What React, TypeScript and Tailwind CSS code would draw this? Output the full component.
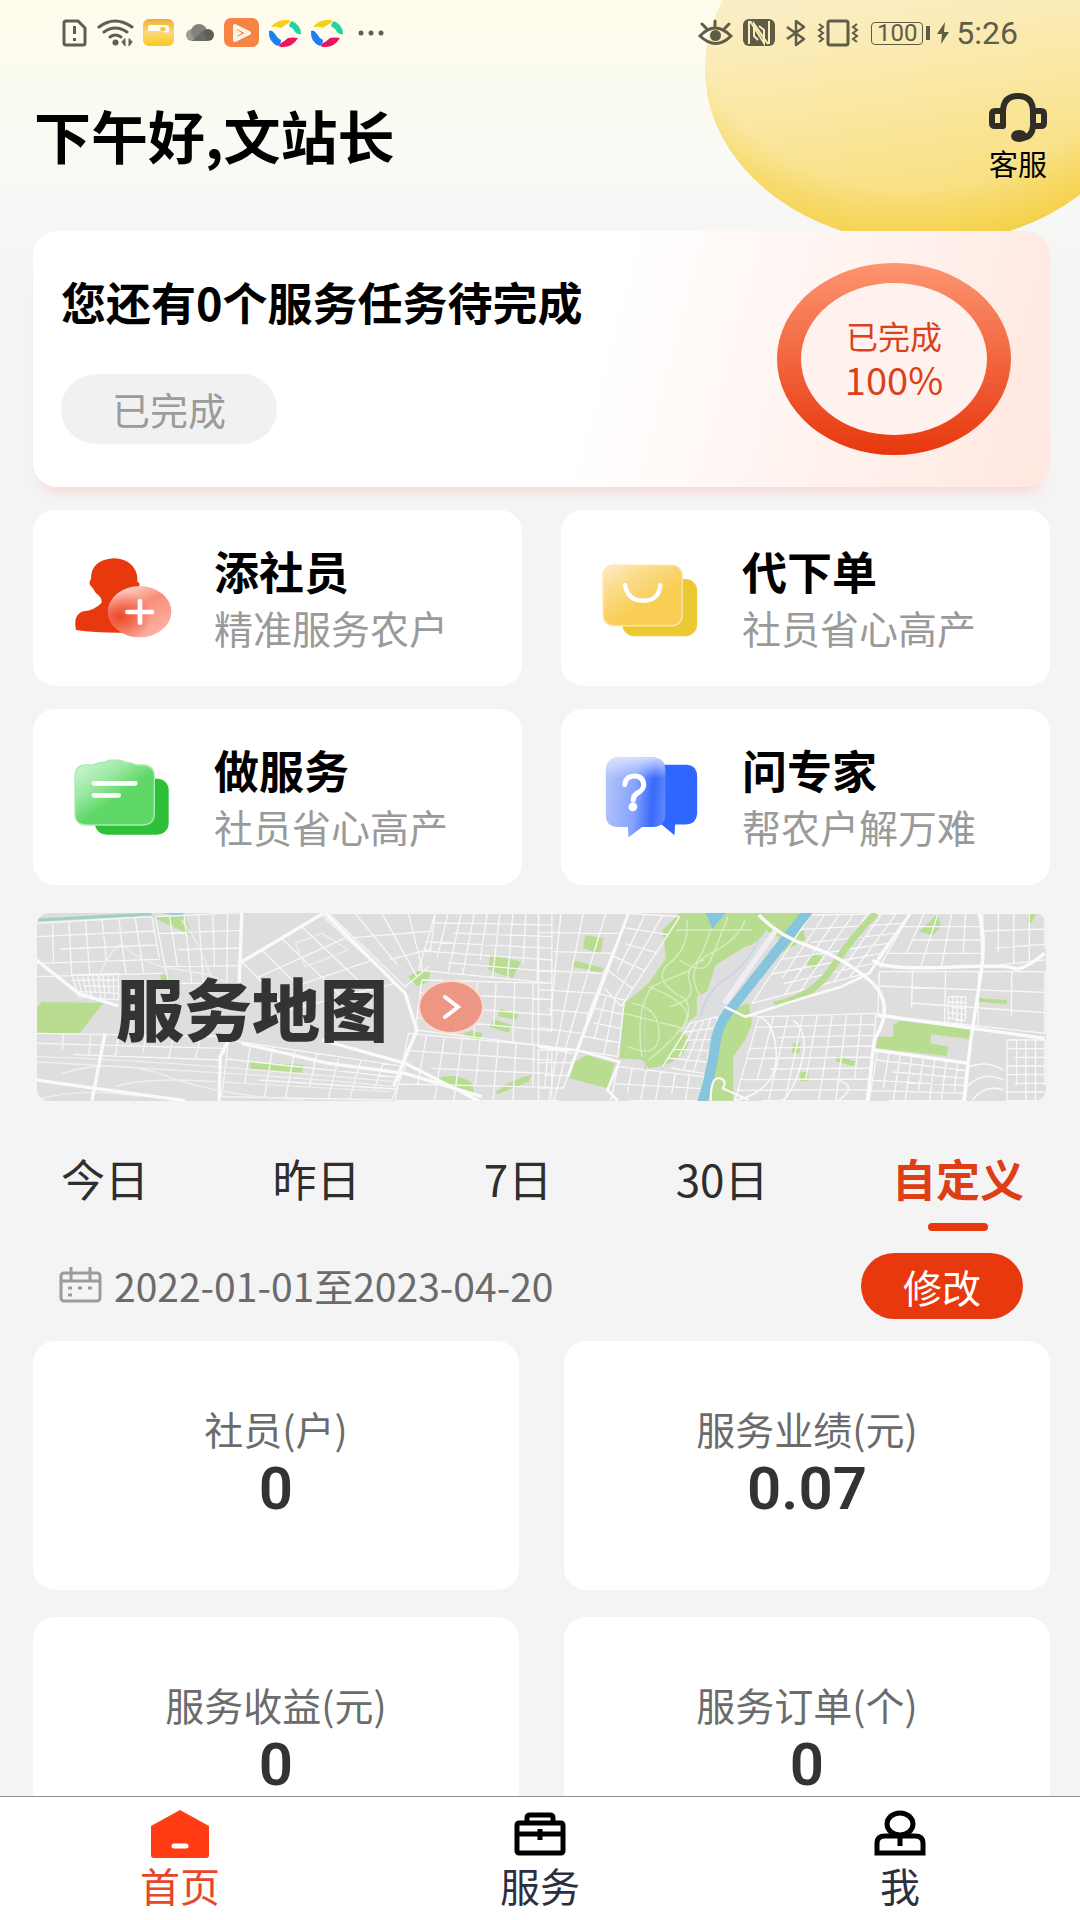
import { useState } from 'react'
import type { ReactNode } from 'react'

type Pt = [number, number]

// Street mesh inside a quad given clockwise from the top left corner
function mesh(a: Pt, b: Pt, c: Pt, d: Pt, cols: number, rows: number) {
  const mix = (p: Pt, q: Pt, t: number): Pt => [p[0] + (q[0] - p[0]) * t, p[1] + (q[1] - p[1]) * t]
  const seg = (p: Pt, q: Pt) => `M${p[0].toFixed(0)} ${p[1].toFixed(0)}L${q[0].toFixed(0)} ${q[1].toFixed(0)}`
  let out = ''
  for (let i = 0; i <= cols; i++) {
    const t = i / cols
    const top = mix(a, b, t)
    const bottom = mix(d, c, t)
    out += i % 3 === 1 ? seg(top, mix(top, bottom, 0.75)) : seg(top, bottom)
  }
  for (let j = 0; j <= rows; j++) {
    const t = j / rows
    const left = mix(a, d, t)
    const right = mix(b, c, t)
    out += j % 3 === 2 ? seg(mix(left, right, 0.2), right) : seg(left, right)
  }
  return out
}

const WEST_STREETS = [
  mesh([22, 70], [370, 50], [400, 220], [22, 230], 7, 4),
  mesh([380, 50], [640, 38], [630, 250], [420, 250], 6, 4),
  mesh([640, 185], [880, 45], [1100, 250], [780, 330], 4, 3),
  mesh([900, 40], [1220, 40], [1200, 200], [1130, 260], 4, 3),
  mesh([1220, 40], [1570, 40], [1570, 250], [1170, 210], 9, 6),
  mesh([1180, 240], [1570, 250], [1570, 440], [1160, 390], 7, 4),
  mesh([130, 225], [270, 220], [270, 300], [150, 290], 9, 4),
  mesh([22, 400], [600, 410], [580, 480], [22, 460], 7, 2),
  mesh([600, 420], [1130, 500], [1090, 600], [580, 590], 8, 3),
  mesh([1140, 400], [1570, 440], [1570, 602], [1100, 602], 8, 4),
]

const EAST_STREETS = [
  mesh([0, 40], [260, 40], [100, 460], [0, 440], 4, 7),
  mesh([260, 40], [410, 50], [240, 320], [180, 250], 3, 5),
  mesh([170, 280], [250, 300], [230, 470], [110, 450], 3, 4),
  mesh([0, 450], [110, 450], [60, 602], [0, 602], 4, 4),
  mesh([230, 500], [480, 530], [470, 602], [210, 602], 6, 2),
  mesh([440, 370], [520, 350], [480, 520], [360, 500], 4, 5),
  mesh([790, 45], [1080, 40], [950, 220], [620, 310], 7, 6),
  mesh([640, 350], [980, 340], [960, 602], [570, 602], 8, 8),
  mesh([1080, 40], [1280, 40], [1290, 200], [990, 200], 5, 4),
  mesh([1290, 40], [1470, 40], [1470, 180], [1290, 200], 4, 3),
  mesh([990, 215], [1470, 215], [1470, 400], [985, 345], 5, 3),
  mesh([1190, 290], [1240, 290], [1240, 380], [1190, 370], 4, 5),
  mesh([985, 450], [1250, 490], [1240, 602], [960, 602], 8, 5),
  mesh([1360, 420], [1470, 420], [1470, 602], [1360, 602], 4, 7),
]

const MAIN_ROADS = 'M22 178 150 280 270 318M640 38 632 250M640 185 885 40M890 40 1130 280 1165 390 1095 560M640 430 900 490 1130 520 1360 590M600 420 575 470 572 602M22 540 200 565 470 602M230 400 190 602M880 420 1130 490 1350 602'

function MapArt() {
  return (
    <svg viewBox="0 0 1010 188" preserveAspectRatio="xMidYMid slice" className="absolute inset-0 w-full h-full" aria-hidden="true">
      <rect width="1010" height="188" fill="#dedede" />
      <g transform="translate(-8 -13) scale(0.33333)" fill="none" strokeLinejoin="round">
        <path d="M22 60 370 42" stroke="#9fd0c4" strokeWidth="9" />
        <path d="M400 40h70l-10 10z" fill="#8cc8e0" />
        <g fill="#b9dd90">
          <path d="M370 50 470 50 492 108z" />
          <path d="M40 306 225 308 155 398 22 402 22 325z" />
          <path d="M1385 162 1478 185 1452 235 1380 210z" />
          <path d="M1140 230 1180 205 1205 210 1200 245 1165 258z" />
          <path d="M1415 325 1470 345 1460 360 1408 348z" />
          <path d="M1395 358 1450 375 1440 398 1383 380z" />
          <path d="M1300 400 1330 392 1363 400 1350 425z" />
          <path d="M665 485 825 495 820 522 665 508z" />
          <path d="M1225 535Q1290 515 1330 550L1338 585 1290 575z" />
          <path d="M1400 578Q1440 540 1510 525L1500 545 1410 582z" />
          <path d="M395 225h25v28h-20z" />
        </g>
        <path d={WEST_STREETS.join('')} stroke="#f7f7f7" strokeWidth="4" />
        <path d="M280 130Q310 170 400 200L545 225M280 130Q220 180 210 250M460 60Q520 140 545 225L625 262M800 130 880 100 960 150 830 200zM22 470Q300 480 560 500T1100 545M22 485Q280 500 600 520T1090 560M100 520Q260 470 420 530T830 600M260 560Q360 530 560 545L1080 575M22 600Q160 560 330 590" stroke="#efefef" strokeWidth="4" />
        <path d={MAIN_ROADS} stroke="#fafafa" strokeWidth="10" />
      </g>
      <g transform="translate(502 -13) scale(0.3444 0.33333)" fill="none" strokeLinejoin="round">
        <g fill="#b9dd90">
          <path d="M412 38H765L730 100 770 90 775 120 700 160 560 330 610 310 620 370 600 420 565 470 565 602H490L520 360 560 330 700 120 660 90 640 130 600 140 515 195 490 275 460 290 460 345 405 390 438 415Q430 490 320 505L300 480 235 475 250 310 320 250 370 175 360 90z" />
          <path d="M135 105 188 115 180 162 130 145z" />
          <path d="M105 182 190 205 183 218 100 200z" />
          <path d="M105 485 140 465 222 490 200 565 90 535z" />
          <path d="M795 155 825 170 800 208 775 190z" />
          <path d="M1105 95 1160 40 1168 80 1145 106z" />
          <path d="M1422 40h22l-12 30h-12z" />
          <path d="M1272 293 1360 300 1360 312 1272 305z" />
          <path d="M1050 362 1256 388 1253 418 1140 402 1138 430 1190 440 1185 468 980 445 985 410 1030 410 1030 375z" />
          <path d="M868 466 922 486 912 498 862 484z" />
          <path d="M760 516h24v28h-24zM738 430h20v28h-22z" />
        </g>
        <path d="M515 195 600 150 655 105 700 110 560 320 500 330 460 345 460 290 490 275z" fill="#dedee0" />
        <path d={EAST_STREETS.join('')} stroke="#f8f8f8" strokeWidth="4" />
        <path d="M685 315Q800 290 855 200T980 40" stroke="#b9dd90" strokeWidth="20" />
        <path d="M485 38h60l-40 48z" fill="#86c5e0" />
        <path d="M785 30 560 325Q520 370 512 440T475 610" stroke="#86c5de" strokeWidth="29" />
        <path d="M640 120Q600 200 545 235T470 350M310 290V510" stroke="#c2d3e2" strokeWidth="4" />
        <path d="M430 60Q440 140 380 190T430 300Q450 360 400 400M500 85Q470 200 420 220T330 260Q280 330 300 470M550 50Q520 130 500 180T410 180M250 340 440 390M600 60Q580 120 500 160T470 290M400 90 620 90M270 310Q350 320 350 400T260 440M320 260Q420 300 430 340T320 480M480 180Q420 200 440 250T380 320" stroke="#d9ecc2" strokeWidth="4" />
        <path d="M1250 500Q1300 480 1350 510M1245 560Q1290 510 1350 540M1260 600Q1300 550 1350 570M600 350Q680 330 690 450T570 602M740 360Q790 400 760 500T700 602M870 540Q930 560 870 602" stroke="#f8f8f8" strokeWidth="5" />
        <path d="M500 602Q500 530 525 535T535 565L610 600" stroke="#fafafa" strokeWidth="6" />
        <path d="M262 38 85 530M0 440 110 450 235 485 200 570 230 602M540 320 600 350 780 290 880 260 960 220 1080 40" stroke="#fafafa" strokeWidth="8" />
        <path d="M640 45Q700 110 790 140T960 240 975 420L955 602M970 180Q1000 210 1180 202T1380 205 1470 160M1280 40Q1300 120 1285 220T1255 420L1235 602M985 345 1470 415M975 450 1250 490" stroke="#fbfbfb" strokeWidth="10" />
        <path d="M540 310 690 90" stroke="#eeeef4" strokeWidth="16" />
      </g>
    </svg>
  )
}

function StatusBar() {
  return (
    <div className="flex items-center justify-between h-[66px] pl-[62px] pr-[62px] text-[#5f5c48]">
      <div className="flex items-center gap-[9px]">
        <svg width="26" height="30" viewBox="0 0 26 30" fill="none" stroke="#5e5e58" strokeWidth="3">
          <path d="M4 3h12l7 7v15q0 2-2 2H4q-2 0-2-2V5q0-2 2-2z" />
          <path d="M12.500 8v8M12.500 20v3" />
        </svg>
        <svg width="37" height="30" viewBox="0 0 37 30" fill="none" stroke="#5e5e58" strokeWidth="3" strokeLinecap="round">
          <path d="M2 9Q18 -3 35 9M7 14q11-8 23 0M13 19q5-4 11 0" />
          <circle cx="18.500" cy="24.500" r="3" fill="#5e5e58" stroke="none" />
          <path d="M28 21v7l-3-4zM32 21v7l3-4z" fill="#5e5e58" strokeWidth="1" />
        </svg>
        <svg width="31" height="28" viewBox="0 0 31 28">
          <defs>
            <linearGradient id="folder" x1="0" y1="0" x2="0" y2="1">
              <stop offset="0" stopColor="#ecb030" />
              <stop offset="0.500" stopColor="#fbd97a" />
              <stop offset="1" stopColor="#fbc81c" />
            </linearGradient>
          </defs>
          <rect width="31" height="27" rx="6" fill="url(#folder)" />
          <path d="M5 12V8q0-2 2-2h16q3 0 3 3v5l-8-2z" fill="#fffdf2" />
          <ellipse cx="20" cy="10" rx="3" ry="2" fill="#f5c850" />
        </svg>
        <svg width="32" height="20" viewBox="1 0 32 20">
          <circle cx="10" cy="12" r="6" fill="#9c9c98" />
          <circle cx="17" cy="9" r="8" fill="#82827e" />
          <circle cx="26" cy="12" r="6" fill="#5e5e5a" />
          <path d="M10 18l10-10 6 10z" fill="#6b6b67" />
        </svg>
        <svg width="35" height="30" viewBox="0 0 35 30">
          <rect width="35" height="29" rx="7" fill="#f58544" />
          <path d="M11 8l14 7-14 7z" fill="#f58544" stroke="#fff3e8" strokeWidth="4" strokeLinejoin="round" />
          <path d="M13 12l5 3-5 3z" fill="#fff3e8" />
        </svg>
        <Pinwheel />
        <Pinwheel />
        <svg width="40" height="10" viewBox="0 0 40 10" fill="#5e5e58">
          <circle cx="9" cy="5" r="2.500" />
          <circle cx="19" cy="5" r="2.500" />
          <circle cx="29" cy="5" r="2.500" />
        </svg>
      </div>
      <div className="flex items-center gap-[10px]">
        <svg width="35" height="30" viewBox="0 0 35 30" fill="none" stroke="#5f5c48" strokeWidth="3" strokeLinecap="round">
          <path d="M2 18q15-16 31 0-15 15-31 0zM17 8V3M8 10 4 6M27 10l4-4" />
          <circle cx="17.500" cy="17.500" r="5.500" fill="#5f5c48" stroke="none" />
        </svg>
        <svg width="32" height="28" viewBox="0 0 32 28">
          <rect width="32" height="27" rx="6" fill="#5f5c48" />
          <path d="M6 2v23M7 2l14 22V11l-5-4M26 25V2M25 25 11 5v12l4 4" fill="none" stroke="#fbeebb" strokeWidth="2" />
        </svg>
        <svg width="22" height="28" viewBox="0 0 22 28" fill="none" stroke="#5f5c48" strokeWidth="2.500" strokeLinejoin="round">
          <path d="M2 8l17 12-8 6V2l8 6L2 20" />
        </svg>
        <svg width="42" height="28" viewBox="0 0 42 28" fill="none" stroke="#5f5c48" strokeWidth="3">
          <rect x="11" y="2" width="20" height="24" rx="2" />
          <path d="M2 5l4 3-4 3 4 3-4 3 4 3-4 3M40 5l-4 3 4 3-4 3 4 3-4 3 4 3" strokeWidth="2" />
        </svg>
        <div className="flex items-center gap-[3px] pl-[2px]">
          <span className="flex items-center justify-center w-[52px] h-[23px] rounded-sm border border-[#5f5c48] text-[24px] leading-[23px]">100</span>
          <span className="w-[4px] h-[14px] bg-[#5f5c48]" />
          <svg width="20" height="22" viewBox="0 0 20 22" fill="#5f5c48">
            <path d="M12 0 4 12h5l-1 10 8-12h-5z" />
          </svg>
          <span className="text-[32px] leading-[36px]">5:26</span>
        </div>
      </div>
    </div>
  )
}

function Pinwheel() {
  return (
    <svg width="33" height="29" viewBox="0 0 33 29">
      <path d="M3 8Q9 0 20 1q5 1-1 4-4 2-6 4-5-2-10-1z" fill="#f7cf14" />
      <path d="M24 2q9 4 9 13-3 1-6-2-2-4-6-6 1-4 3-5z" fill="#21d3a0" />
      <path d="M30 19q-6 10-17 9-4-1 0-4 4-2 7-5 5-1 10 0z" fill="#f0125a" />
      <path d="M10 27Q0 23 1 12q3-2 6 3 2 4 6 6 0 4-3 6z" fill="#1c7ef0" />
    </svg>
  )
}

function AddMemberIcon() {
  return (
    <svg width="110" height="90" viewBox="120 159 330 270">
      <defs>
        <linearGradient id="plus" x1="0.200" y1="0" x2="0.800" y2="1">
          <stop offset="0" stopColor="#fddcd4" />
          <stop offset="0.400" stopColor="#f88f7b" />
          <stop offset="1" stopColor="#fcb5a6" />
        </linearGradient>
        <radialGradient id="plusShade" cx="0.200" cy="0.600" r="0.500">
          <stop offset="0" stopColor="#ea4220" stopOpacity="0.900" />
          <stop offset="1" stopColor="#ea4220" stopOpacity="0" />
        </radialGradient>
      </defs>
      <path d="M250 175C300 175 326 210 322 245Q333 248 326 262Q310 285 300 310L280 398Q200 399 138 390Q128 345 160 334Q195 330 215 308Q216 292 198 280Q188 262 180 255Q176 245 183 238Q182 180 250 175z" fill="#e8380d" />
      <ellipse cx="329" cy="335" rx="95" ry="77" fill="url(#plus)" />
      <ellipse cx="329" cy="335" rx="95" ry="77" fill="url(#plusShade)" />
      <path d="M292 336h74M330 304v64" stroke="#fff" strokeWidth="14" strokeLinecap="round" />
    </svg>
  )
}

function OrderIcon() {
  return (
    <svg width="110" height="90" viewBox="142 161 325 266">
      <defs>
        <linearGradient id="bag" x1="0" y1="0" x2="0.600" y2="0.800">
          <stop offset="0" stopColor="#fdecc9" />
          <stop offset="0.400" stopColor="#fadb8a" />
          <stop offset="0.850" stopColor="#f8ce55" />
        </linearGradient>
      </defs>
      <rect x="214" y="238" width="221" height="169" rx="34" fill="#ebc930" />
      <rect x="157" y="197" width="234" height="179" rx="30" fill="url(#bag)" stroke="#fce6ae" strokeWidth="4" />
      <path d="M222 256Q230 302 276 302T326 256" fill="none" stroke="#fff" strokeWidth="13" strokeLinecap="round" />
    </svg>
  )
}

function ServiceIcon() {
  return (
    <svg width="110" height="90" viewBox="120 756 330 270">
      <defs>
        <linearGradient id="clip" x1="0" y1="0" x2="0.600" y2="0.700">
          <stop offset="0" stopColor="#d8f6da" />
          <stop offset="0.500" stopColor="#9be8a3" />
          <stop offset="0.850" stopColor="#5fd867" />
        </linearGradient>
      </defs>
      <rect x="195" y="836" width="221" height="168" rx="34" fill="#2ec038" />
      <path d="M168 795H190Q205 786 225 786Q235 780 255 780T285 787Q300 786 318 795H340Q373 797 373 830V940Q373 975 338 975H170Q135 975 135 940V828Q136 796 168 795z" fill="url(#clip)" stroke="#a8ebaf" strokeWidth="4" />
      <path d="M192 850H316M192 886H266" stroke="#fff" strokeWidth="14" strokeLinecap="round" />
    </svg>
  )
}

function ExpertIcon() {
  return (
    <svg width="110" height="90" viewBox="142 757 325 266">
      <defs>
        <linearGradient id="ask" x1="0" y1="0.300" x2="1" y2="0.400">
          <stop offset="0" stopColor="#b3c4fb" />
          <stop offset="0.500" stopColor="#86a3fc" />
          <stop offset="0.800" stopColor="#3a68fb" />
          <stop offset="1" stopColor="#5c86fb" />
        </linearGradient>
        <linearGradient id="askTop" x1="0" y1="0" x2="0" y2="1">
          <stop offset="0" stopColor="#dfe6ff" stopOpacity="0.900" />
          <stop offset="0.300" stopColor="#dfe6ff" stopOpacity="0" />
        </linearGradient>
      </defs>
      <path d="M320 795H405Q435 797 435 830V940Q433 970 400 971H370L368 1003 330 971H310z" fill="#2f66ff" />
      <path d="M200 773H305Q341 775 341 810V942Q340 978 306 979H272L232 1010 230 979H200Q165 978 165 942V810Q166 775 200 773z" fill="url(#ask)" />
      <path d="M200 773H305Q341 775 341 810V942Q340 978 306 979H200Q165 978 165 942V810Q166 775 200 773z" fill="url(#askTop)" />
      <path d="M221 853Q224 828 250 828T277 855Q276 870 256 880Q246 887 246 899" fill="none" stroke="#fff" strokeWidth="15" strokeLinecap="round" />
      <circle cx="245" cy="919" r="13" fill="#fff" />
    </svg>
  )
}

const ACTIONS: { title: string; desc: string; icon: ReactNode }[] = [
  { title: '添社员', desc: '精准服务农户', icon: <AddMemberIcon /> },
  { title: '代下单', desc: '社员省心高产', icon: <OrderIcon /> },
  { title: '做服务', desc: '社员省心高产', icon: <ServiceIcon /> },
  { title: '问专家', desc: '帮农户解万难', icon: <ExpertIcon /> },
]

const RANGES = ['今日', '昨日', '7日', '30日', '自定义']

const STATS = [
  { label: '社员(户)', value: '0' },
  { label: '服务业绩(元)', value: '0.07' },
  { label: '服务收益(元)', value: '0' },
  { label: '服务订单(个)', value: '0' },
]

const NAV: { label: string; icon: ReactNode }[] = [
  {
    label: '首页',
    icon: (
      <svg width="60" height="50" viewBox="0 0 60 50">
        <path d="M30 1 59 17V46q0 3-3 3H4q-3 0-3-3V17z" fill="#ff3c14" />
        <path d="M24 37h12" stroke="#fff" strokeWidth="5" strokeLinecap="round" />
      </svg>
    ),
  },
  {
    label: '服务',
    icon: (
      <svg width="60" height="50" viewBox="0 0 60 50" fill="none" stroke="#000" strokeWidth="5" strokeLinejoin="round">
        <rect x="7" y="14" width="46" height="30" rx="2" />
        <path d="M17 14V9q0-3 3-3h20q3 0 3 3v5M7 25h46M30 20v11" />
      </svg>
    ),
  },
  {
    label: '我',
    icon: (
      <svg width="60" height="50" viewBox="0 0 60 50" fill="none" stroke="#000" strokeWidth="5">
        <ellipse cx="30" cy="15" rx="13" ry="11" />
        <path d="M7 44V34q0-7 8-7h30q8 0 8 7v10zM30 27v10" />
      </svg>
    ),
  },
]

export default function App() {
  const [range, setRange] = useState('自定义')
  const [tab, setTab] = useState('首页')

  return (
    <div className="flex flex-col h-screen bg-[#f4f4f4] font-['Noto_Sans_CJK_SC',sans-serif] text-black">
      <div className="flex-1 min-h-0 overflow-y-auto [scrollbar-width:none] bg-linear-to-b from-[#fffceb] via-[#f9faf6] via-[160px] to-[#f4f4f4] to-[300px]">
        {/* Header */}
        <header className="relative h-[231px] overflow-hidden">
          <svg width="375" height="231" viewBox="0 0 375 231" className="absolute top-0 right-0" aria-hidden="true">
            <defs>
              <linearGradient id="sun" x1="0.400" y1="0" x2="0.600" y2="1">
                <stop offset="0.250" stopColor="#fbeec6" />
                <stop offset="0.550" stopColor="#fae8a4" />
                <stop offset="1" stopColor="#f8db70" />
              </linearGradient>
              <radialGradient id="sunEdge" cx="0.470" cy="0.350" r="0.680">
                <stop offset="0.720" stopColor="#f3cc35" stopOpacity="0" />
                <stop offset="1" stopColor="#f3cc35" stopOpacity="0.800" />
              </radialGradient>
            </defs>
            <ellipse cx="221" cy="69" rx="221" ry="175" fill="url(#sun)" />
            <ellipse cx="221" cy="69" rx="221" ry="175" fill="url(#sunEdge)" />
          </svg>
          <div className="relative font-[Roboto,sans-serif]">
            <StatusBar />
          </div>
          <div className="relative flex items-start justify-between pl-[34px] pr-[32px] pt-[24px]">
            <h1 className="text-[57px] leading-[88px] font-bold">下午好,文站长</h1>
            <a href="#service" className="flex flex-col items-center text-[29px] leading-[38px]">
              <svg width="60" height="54" viewBox="0 0 60 54" fill="none" stroke="#302e26" strokeWidth="6" strokeLinejoin="round">
                <path d="M15 36H7q-3 0-3-3V24q0-3 3-3h8zM15 21v15M15 22Q15 6 30 6T45 22V36Q44 48 33 48" />
                <path d="M45 21h8q3 0 3 3v9q0 3-3 3h-8" />
                <ellipse cx="31" cy="46" rx="5" ry="3" fill="#302e26" />
              </svg>
              <span>客服</span>
            </a>
          </div>
        </header>

        <main className="pr-[30px] pl-[33px]">
          {/* Task summary */}
          <section className="flex items-center justify-between h-[256px] pl-[28px] pr-[39px] rounded-[24px] bg-linear-105 from-white from-55% to-[#ffe7df] shadow-[0_12px_12px_-8px_rgba(255,190,190,0.6)]">
            <div className="flex flex-col items-start gap-[42px] pb-[2px]">
              <h2 className="text-[45px] leading-[60px] font-bold">您还有0个服务任务待完成</h2>
              <button type="button" className="h-[70px] px-[51px] rounded-full bg-[#f1f1f1] text-[38px] leading-[56px] text-[#9b9b9b]">已完成</button>
            </div>
            <div className="relative flex flex-col items-center justify-center w-[234px] h-[192px] pb-[4px] text-[#d9421a]">
              <svg viewBox="0 0 234 192" className="absolute inset-0 w-full h-full" aria-hidden="true">
                <defs>
                  <linearGradient id="ring" x1="0" y1="0" x2="0" y2="1">
                    <stop offset="0" stopColor="#fc9570" />
                    <stop offset="1" stopColor="#e7370d" />
                  </linearGradient>
                </defs>
                <ellipse cx="117" cy="96" rx="117" ry="96" fill="url(#ring)" />
                <ellipse cx="117" cy="96" rx="93" ry="76" fill="#fff2ee" />
              </svg>
              <span className="relative text-[32px] leading-[44px]">已完成</span>
              <span className="relative text-[38px] leading-[44px]">100%</span>
            </div>
          </section>

          {/* Quick actions */}
          <div className="grid grid-cols-2 gap-x-[39px] gap-y-[23px] mt-[23px]">
            {ACTIONS.map((a) => (
              <button key={a.title} type="button" className="flex items-center gap-[34px] h-[176px] pl-[37px] rounded-[22px] bg-white text-left">
                {a.icon}
                <span className="flex flex-col pt-[2px]">
                  <span className="text-[45px] leading-[57px] font-bold">{a.title}</span>
                  <span className="text-[39px] leading-[57px] text-[#9a9a9a]">{a.desc}</span>
                </span>
              </button>
            ))}
          </div>

          {/* Service map */}
          <a href="#map" className="relative flex items-center gap-[30px] h-[188px] mx-[4px] mt-[28px] pl-[79px] rounded-[12px] overflow-hidden">
            <MapArt />
            <span className="relative text-[68px] leading-[100px] font-black text-[#333]">服务地图</span>
            <svg width="66" height="54" viewBox="0 0 66 54" className="relative" aria-hidden="true">
              <ellipse cx="33" cy="27" rx="32" ry="26" fill="#ef8f7c" fillOpacity="0.920" stroke="#f8dcd4" strokeWidth="2" />
              <path d="M27 17l13 10-13 10" fill="none" stroke="#fff" strokeWidth="4" strokeLinecap="round" />
            </svg>
          </a>

          {/* Date range */}
          <div role="tablist" className="flex justify-between pl-[28px] pr-[26px] mt-[47px] text-[44px] leading-[60px]">
            {RANGES.map((r) => (
              <button
                key={r}
                type="button"
                role="tab"
                aria-selected={range === r}
                onClick={() => setRange(r)}
                className={range === r ? 'flex flex-col items-center font-bold text-[#de3e14]' : 'flex flex-col items-center text-[#2e2e2e]'}
              >
                {r}
                {range === r && <span className="w-[60px] h-[8px] mt-[15px] rounded-full bg-[#e8380d]" />}
              </button>
            ))}
          </div>
          <div className="flex items-center justify-between mt-[22px] pl-[26px] pr-[27px]">
            <div className="flex items-center gap-[12px] pb-[2px] text-[39px] leading-[56px] text-[#6b6b6b]">
              <svg width="43" height="36" viewBox="0 0 43 36" fill="none" stroke="#9b9b9b" strokeWidth="3">
                <rect x="2" y="6" width="39" height="28" rx="3" />
                <path d="M2 14h39M12 0v14M31 0v14" />
                <path d="M9 21h4M19 21h4M29 21h4M9 28h4" />
              </svg>
              2022-01-01至2023-04-20
            </div>
            <button type="button" className="h-[66px] px-[42px] rounded-full bg-[#e8380d] text-[39px] leading-[56px] text-white">修改</button>
          </div>

          {/* Stats */}
          <div className="grid grid-cols-2 gap-x-[45px] gap-y-[27px] mt-[22px] pb-[30px]">
            {STATS.map((s) => (
              <div key={s.label} className="flex flex-col items-center justify-center h-[249px] pb-[10px] rounded-[22px] bg-white">
                <span className="text-[39px] leading-[56px] text-[#6b6b6b]">{s.label}</span>
                <span className="font-[Roboto,sans-serif] text-[60px] leading-[66px] font-semibold text-[#333]">{s.value}</span>
              </div>
            ))}
          </div>
        </main>
      </div>

      <nav className="grid grid-cols-3 h-[124px] shrink-0 border-t border-[#8f8f8f] bg-white">
        {NAV.map((n) => (
          <button
            key={n.label}
            type="button"
            onClick={() => setTab(n.label)}
            className={tab === n.label ? 'flex flex-col items-center pt-[12px] text-[#e8452a]' : 'flex flex-col items-center pt-[12px] text-[#2b2f40]'}
          >
            {n.icon}
            <span className="text-[40px] leading-[52px]">{n.label}</span>
          </button>
        ))}
      </nav>
    </div>
  )
}
